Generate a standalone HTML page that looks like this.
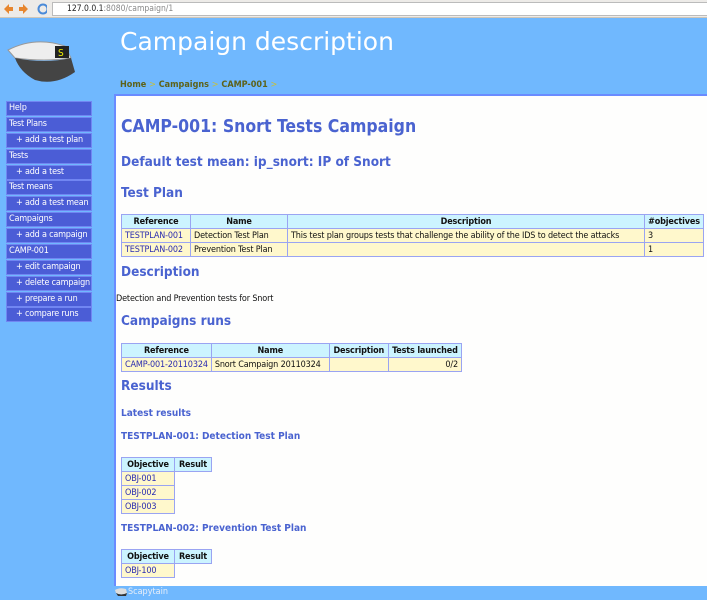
<!DOCTYPE html>
<html><head><meta charset="utf-8"><style>
*{margin:0;padding:0;box-sizing:border-box}
body{width:707px;height:600px;overflow:hidden;background:#70b8fe;font-family:"DejaVu Sans Condensed","DejaVu Sans",sans-serif;position:relative}
.a{position:absolute;white-space:nowrap}
#bar{left:0;top:0;width:707px;height:18px;background:#edebe8;border-bottom:1px solid #cfc6b8}
#url{left:52px;top:2px;width:660px;height:14px;background:#fff;border:1px solid #bbb;font-size:8.5px;line-height:12px;padding-left:14px;color:#222}
#url span{color:#888}
#hdr{left:120px;top:27px;font-size:25px;color:#fff;font-family:"DejaVu Sans",sans-serif}
#bc{left:120px;top:80px;font-size:9px;font-weight:bold;color:#5d6219}
#bc b{color:#c7c03a;font-weight:normal}
#content{left:114px;top:94px;width:593px;height:492px;background:#fefefd;border-top:2px solid #6a8bff;border-left:2px solid #6a8bff}
.m{position:absolute;left:6px;width:86px;height:15px;background:#4b5dd6;border:1px solid #7186f2;color:#fff;font-size:9px;letter-spacing:-0.2px;line-height:13px;padding-left:2px;white-space:nowrap;overflow:hidden}
.m.s{padding-left:9px}
h{position:absolute;color:#4a63d0;font-weight:bold;white-space:nowrap}
table{position:absolute;border-collapse:collapse;font-size:9px;letter-spacing:-0.15px}
td,th{border:1px solid #9aa4f2;height:14px;padding:0 3px;white-space:nowrap}
th{background:#ccf4ff;color:#111}
td{background:#fff8cc;color:#111}
td.l{color:#2a2bb0}
td.n{border:none;background:none}
</style></head><body>
<div class="a" id="bar"></div>
<svg class="a" style="left:3px;top:3px" width="44" height="12"><path d="M1 6l5-5v3h4v4H6v3z" fill="#e7862e"/><path d="M25 6l-5-5v3h-4v4h4v3z" fill="#e7862e"/><circle cx="40" cy="6" r="4.5" fill="none" stroke="#4a8ad8" stroke-width="2"/></svg>
<div class="a" id="url">127.0.0.1<span>:8080/campaign/1</span></div>
<svg class="a" style="left:5px;top:36px" width="72" height="50"><path d="M3 14 Q30 0 60 10 L66 22 Q40 26 10 22 Z" fill="#eee" stroke="#999"/><path d="M10 22 Q40 28 66 22 L70 36 Q50 50 30 44 Q15 36 10 22Z" fill="#444"/><rect x="50" y="10" width="14" height="12" fill="#222"/><text x="53" y="20" font-size="10" fill="#ee0">S</text></svg>
<div class="a" id="hdr">Campaign description</div>
<div class="a" id="bc">Home <b>&gt;</b> Campaigns <b>&gt;</b> CAMP-001 <b>&gt;</b></div>
<div class="m" style="top:101px">Help</div>
<div class="m" style="top:117px">Test Plans</div>
<div class="m s" style="top:133px">+ add a test plan</div>
<div class="m" style="top:149px">Tests</div>
<div class="m s" style="top:165px">+ add a test</div>
<div class="m" style="top:180px">Test means</div>
<div class="m s" style="top:196px">+ add a test mean</div>
<div class="m" style="top:212px">Campaigns</div>
<div class="m s" style="top:228px">+ add a campaign</div>
<div class="m" style="top:244px">CAMP-001</div>
<div class="m s" style="top:260px">+ edit campaign</div>
<div class="m s" style="top:276px">+ delete campaign</div>
<div class="m s" style="top:292px">+ prepare a run</div>
<div class="m s" style="top:307px">+ compare runs</div>
<div class="a" id="content"></div>
<h style="left:121px;top:117px;font-size:17.5px">CAMP-001: Snort Tests Campaign</h>
<h style="left:121px;top:154px;font-size:13.5px">Default test mean: ip_snort: IP of Snort</h>
<h style="left:121px;top:185px;font-size:13.5px">Test Plan</h>
<table style="left:121px;top:214px;width:583px">
<tr><th style="width:69px">Reference</th><th style="width:97px">Name</th><th>Description</th><th style="width:59px">#objectives</th></tr>
<tr><td class="l">TESTPLAN-001</td><td>Detection Test Plan</td><td>This test plan groups tests that challenge the ability of the IDS to detect the attacks</td><td>3</td></tr>
<tr><td class="l">TESTPLAN-002</td><td>Prevention Test Plan</td><td></td><td>1</td></tr>
</table>
<h style="left:121px;top:264px;font-size:13.5px">Description</h>
<div class="a" style="left:116px;top:294px;font-size:9px;letter-spacing:-0.15px;color:#111">Detection and Prevention tests for Snort</div>
<h style="left:121px;top:313px;font-size:13.5px">Campaigns runs</h>
<table style="left:121px;top:343px;width:341px">
<tr><th style="width:88px">Reference</th><th style="width:118px">Name</th><th style="width:59px">Description</th><th>Tests launched</th></tr>
<tr><td class="l">CAMP-001-20110324</td><td>Snort Campaign 20110324</td><td></td><td style="text-align:right">0/2</td></tr>
</table>
<h style="left:121px;top:378px;font-size:13.5px">Results</h>
<h style="left:121px;top:408px;font-size:10px">Latest results</h>
<h style="left:121px;top:431px;font-size:10px">TESTPLAN-001: Detection Test Plan</h>
<table style="left:121px;top:457px;width:91px">
<tr><th style="width:53px">Objective</th><th>Result</th></tr>
<tr><td class="l">OBJ-001</td><td class="n"></td></tr><tr><td class="l">OBJ-002</td><td class="n"></td></tr><tr><td class="l">OBJ-003</td><td class="n"></td></tr>
</table>
<h style="left:121px;top:523px;font-size:10px">TESTPLAN-002: Prevention Test Plan</h>
<table style="left:121px;top:549px;width:91px">
<tr><th style="width:53px">Objective</th><th>Result</th></tr>
<tr><td class="l">OBJ-100</td><td class="n"></td></tr>
</table>
<svg class="a" style="left:114px;top:587px" width="14" height="10"><path d="M1 3 Q6 0 12 2 L13 6 Q7 9 2 6Z" fill="#ddd"/><path d="M2 6 Q7 9 13 6 L12 9 H4Z" fill="#333"/></svg>
<div class="a" style="left:128px;top:587px;font-size:9px;color:#e8eef8">Scapytain</div>
</body></html>
